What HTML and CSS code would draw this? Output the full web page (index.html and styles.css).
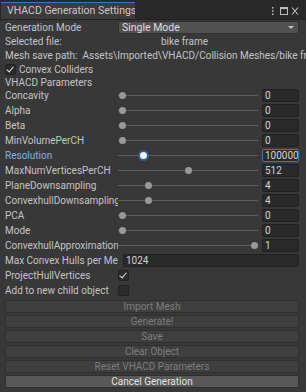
FILE: index.html
```html
<!DOCTYPE html>
<html lang="en">
<head>
    <meta charset="UTF-8">
    <title>VHACD Generation Settings</title>
    <link rel="stylesheet" href="styles.css">
</head>
<body>
    <div class="tabbar">
        <div class="tab">VHACD Generation Settings</div>
        <div class="tab-icons">
            <svg width="30" height="12" viewBox="0 0 30 12">
                <rect x="2" y="2" width="1.4" height="1.6" fill="#bdbdbd"/>
                <rect x="2" y="5.2" width="1.4" height="1.6" fill="#bdbdbd"/>
                <rect x="2" y="8.4" width="1.4" height="1.6" fill="#bdbdbd"/>
                <rect x="10.5" y="2.5" width="7" height="7" fill="none" stroke="#bdbdbd" stroke-width="1"/>
                <rect x="10.5" y="2.5" width="7" height="1.6" fill="#bdbdbd"/>
                <path d="M22 2.5 L28 9.5 M28 2.5 L22 9.5" stroke="#bdbdbd" stroke-width="1.1"/>
            </svg>
        </div>
    </div>

    <div class="content">
        <div class="row r-mode">
            <span class="label">Generation Mode</span>
            <div class="dropdown">Single Mode<span class="arrow"></span></div>
        </div>
        <div class="row r-info">
            <span class="label">Selected file:</span>
            <span class="file">bike frame</span>
        </div>
        <div class="row r-info">
            <span class="label wide">Mesh save path:&nbsp; Assets\Imported\VHACD/Collision Meshes/bike frame</span>
        </div>
        <div class="row r-toggle">
            <span class="check on"></span>
            <span class="label">Convex Colliders</span>
        </div>
        <div class="row r-head">
            <span class="label">VHACD Parameters</span>
        </div>

        <div class="row">
            <span class="label">Concavity</span>
            <div class="slider"><span class="knob" style="left: 4px"></span></div>
            <div class="num">0</div>
        </div>
        <div class="row">
            <span class="label">Alpha</span>
            <div class="slider"><span class="knob" style="left: 4px"></span></div>
            <div class="num">0</div>
        </div>
        <div class="row">
            <span class="label">Beta</span>
            <div class="slider"><span class="knob" style="left: 4px"></span></div>
            <div class="num">0</div>
        </div>
        <div class="row">
            <span class="label">MinVolumePerCH</span>
            <div class="slider"><span class="knob" style="left: 4px"></span></div>
            <div class="num">0</div>
        </div>
        <div class="row">
            <span class="label active">Resolution</span>
            <div class="slider"><span class="knob focus" style="left: 25px"></span></div>
            <div class="num focus">100000</div>
        </div>
        <div class="row">
            <span class="label">MaxNumVerticesPerCH</span>
            <div class="slider"><span class="knob" style="left: 70px"></span></div>
            <div class="num">512</div>
        </div>
        <div class="row">
            <span class="label">PlaneDownsampling</span>
            <div class="slider"><span class="knob" style="left: 30px"></span></div>
            <div class="num">4</div>
        </div>
        <div class="row">
            <span class="label">ConvexhullDownsampling</span>
            <div class="slider"><span class="knob" style="left: 30px"></span></div>
            <div class="num">4</div>
        </div>
        <div class="row">
            <span class="label">PCA</span>
            <div class="slider"><span class="knob" style="left: 4px"></span></div>
            <div class="num">0</div>
        </div>
        <div class="row">
            <span class="label">Mode</span>
            <div class="slider"><span class="knob" style="left: 4px"></span></div>
            <div class="num">0</div>
        </div>
        <div class="row">
            <span class="label">ConvexhullApproximation</span>
            <div class="slider"><span class="knob" style="left: 136px"></span></div>
            <div class="num">1</div>
        </div>
        <div class="row">
            <span class="label">Max Convex Hulls per Me</span>
            <div class="field">1024</div>
        </div>
        <div class="row">
            <span class="label">ProjectHullVertices</span>
            <span class="check on"></span>
        </div>
        <div class="row">
            <span class="label">Add to new child object</span>
            <span class="check"></span>
        </div>

        <div class="buttons">
            <div class="btn">Import Mesh</div>
            <div class="btn">Generate!</div>
            <div class="btn">Save</div>
            <div class="btn">Clear Object</div>
            <div class="btn">Reset VHACD Parameters</div>
            <div class="btn primary">Cancel Generation</div>
        </div>
    </div>
</body>
</html>
```

FILE: styles.css
```css
body {
    margin: 0;
    background: #383838;
    color: #c4c4c4;
    font-family: Roboto, "Noto Sans", sans-serif;
    font-size: 10px;
    overflow: hidden;
}
.tabbar {
    display: flex;
    justify-content: space-between;
    align-items: center;
    height: 19px;
    background: #282828;
    border-bottom: 1px solid #232323;
}
.tab {
    align-self: flex-end;
    margin-left: 1px;
    width: 134px;
    height: 17px;
    line-height: 16px;
    padding-left: 6px;
    box-sizing: border-box;
    background: #3c3c3c;
    border-top: 1px solid #3a79bb;
    color: #c8c8c8;
    font-size: 10.5px;
    white-space: nowrap;
    overflow: hidden;
}
.tab-icons {
    display: flex;
    margin-right: 6px;
    margin-top: 2px;
}
.content {
    padding: 0 7px 0 5px;
}
.row {
    display: flex;
    align-items: center;
    height: 15px;
}
.r-mode,
.r-info,
.r-toggle {
    height: 14px;
}
.r-head {
    height: 12px;
}
.label {
    width: 113px;
    flex: none;
    white-space: nowrap;
    overflow: hidden;
}
.label.wide {
    width: 301px;
    overflow: hidden;
}
.label.active {
    color: #7fb2e5;
}
.file {
    margin-left: 43px;
}
.dropdown {
    position: relative;
    flex: 1;
    height: 11px;
    line-height: 11px;
    padding-left: 3px;
    background: #515151;
    border: 1px solid #303030;
    border-radius: 2px;
    color: #dedede;
    font-size: 10.5px;
}
.arrow {
    position: absolute;
    right: 4px;
    top: 4px;
    border-left: 3px solid transparent;
    border-right: 3px solid transparent;
    border-top: 3px solid #c4c4c4;
}
.check {
    display: inline-block;
    flex: none;
    width: 9px;
    height: 9px;
    background: #2b2b2b;
    border: 1px solid #222;
    border-radius: 2px;
    position: relative;
}
.r-toggle .check {
    margin-right: 3px;
}
.check.on::after {
    content: "";
    position: absolute;
    left: 2px;
    top: 0px;
    width: 3px;
    height: 6px;
    border-right: 1.5px solid #e4e4e4;
    border-bottom: 1.5px solid #e4e4e4;
    transform: rotate(40deg);
}
.slider {
    position: relative;
    width: 140px;
    height: 13px;
    margin-right: 4px;
    flex: none;
}
.slider::before {
    content: "";
    position: absolute;
    left: 0;
    right: 0;
    top: 6px;
    height: 1px;
    background: #5e5e5e;
}
.knob {
    position: absolute;
    top: 3px;
    width: 7px;
    height: 7px;
    margin-left: -3.5px;
    border-radius: 50%;
    background: #999;
}
.knob.focus {
    top: 1px;
    margin-left: -5.5px;
    background: #f0f0f0;
    border: 2px solid #2c5d8f;
}
.num, .field {
    height: 11px;
    line-height: 11px;
    padding-left: 2px;
    background: #2a2a2a;
    border: 1px solid #212121;
    border-radius: 2px;
    color: #d2d2d2;
    overflow: hidden;
    white-space: nowrap;
}
.num {
    width: 34px;
}
.num.focus {
    border-color: #3a79bb;
}
.field {
    flex: 1;
    margin-left: 5px;
}
.buttons {
    display: flex;
    flex-direction: column;
    gap: 2px;
    margin-top: 2px;
}
.btn {
    height: 11px;
    line-height: 11px;
    text-align: center;
    background: #3f3f3f;
    border: 1px solid #303030;
    border-radius: 2px;
    color: #7d7d7d;
}
.btn.primary {
    background: #585858;
    border-color: #303030;
    color: #e4e4e4;
}
```
